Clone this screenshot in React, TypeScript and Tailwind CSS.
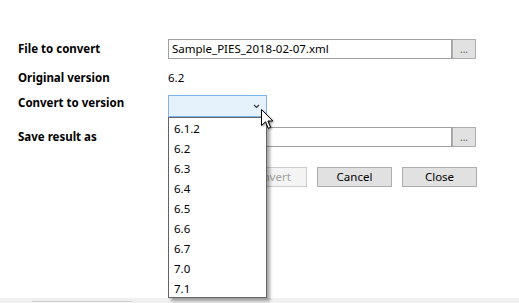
import React from "react";

const items = ["6.1.2", "6.2", "6.3", "6.4", "6.5", "6.6", "6.7", "7.0", "7.1"];

export default function App() {
  return (
    <div
      className="relative w-[519px] h-[303px] bg-white text-black flex flex-col overflow-hidden"
      style={{ fontFamily: '"Noto Sans", "Open Sans", sans-serif' }}
    >
      <div className="flex-1 pt-[39px] pl-[18px] text-[11.5px]">
        {/* Row 1 */}
        <div className="flex items-center h-[20px]">
          <div className="w-[150px] font-bold">File to convert</div>
          <div className="w-[284px] h-[20px] border border-[#a0a0a0] bg-white pl-[3px] leading-[18px]">
            Sample_PIES_2018-02-07.xml
          </div>
          <div className="w-[24px] h-[20px] border border-[#adadad] bg-[#e1e1e1] flex items-center justify-center text-[10px] leading-none text-[#555]">
            ...
          </div>
        </div>
        {/* Row 2 */}
        <div className="flex items-center h-[20px] mt-[9px]">
          <div className="w-[150px] font-bold">Original version</div>
          <div>6.2</div>
        </div>
        {/* Row 3 */}
        <div className="flex items-start h-[22px] mt-[7px]">
          <div className="w-[150px] font-bold leading-[16px]">Convert to version</div>
          <div className="w-[99px] h-[22px] border border-[#7eb4ea] bg-[#e5f1fb] flex items-center justify-end pr-[6px]">
            <svg width="7" height="5" viewBox="0 0 7 5">
              <path d="M1 1 L3.5 3.5 L6 1" stroke="#333" strokeWidth="1.2" fill="none" />
            </svg>
          </div>
        </div>
        {/* Row 4 */}
        <div className="flex items-center h-[20px] mt-[10px]">
          <div className="w-[150px] font-bold">Save result as</div>
          <div className="w-[284px] h-[20px] border border-[#a0a0a0] bg-white" />
          <div className="w-[24px] h-[20px] border border-[#adadad] bg-[#e1e1e1] flex items-center justify-center text-[10px] leading-none text-[#555]">
            ...
          </div>
        </div>
        {/* Row 5 */}
        <div className="flex justify-end gap-[10px] w-[459px] mt-[20px]">
          <div className="w-[75px] h-[20px] border border-[#cccccc] bg-[#f4f4f4] text-[#a0a0a0] flex items-center justify-center">
            Convert
          </div>
          <div className="w-[75px] h-[20px] border border-[#adadad] bg-[#e1e1e1] flex items-center justify-center">
            Cancel
          </div>
          <div className="w-[75px] h-[20px] border border-[#adadad] bg-[#e1e1e1] flex items-center justify-center">
            Close
          </div>
        </div>
      </div>
      {/* bottom strip */}
      <div className="h-[5px] bg-[#f0f0f0] flex">
        <div className="ml-[32px] mt-[3px] w-[100px] h-[2px] border-t border-[#cfcfcf] bg-[#f7f7f7]" />
      </div>

      {/* Dropdown list */}
      <div className="absolute left-[168px] top-[117px] w-[99px] h-[181px] border border-[#646464] bg-white shadow-[3px_3px_3px_rgba(0,0,0,0.35)] overflow-hidden pt-[1px] text-[11.5px]">
        {items.map((v) => (
          <div key={v} className="h-[20px] leading-[20px] pl-[5px]">
            {v}
          </div>
        ))}
      </div>

      {/* Cursor */}
      <svg
        className="absolute left-[261px] top-[109px]"
        width="14"
        height="22"
        viewBox="0 0 14 22"
        style={{ filter: "drop-shadow(1px 1px 1px rgba(0,0,0,0.4))" }}
      >
        <path
          d="M0.5 0.5 L0.5 16.5 L4.5 12.8 L7.3 19.3 L9.6 18.3 L6.9 12 L11.8 12 Z"
          fill="white"
          stroke="black"
          strokeWidth="1"
          strokeLinejoin="miter"
        />
      </svg>
    </div>
  );
}
